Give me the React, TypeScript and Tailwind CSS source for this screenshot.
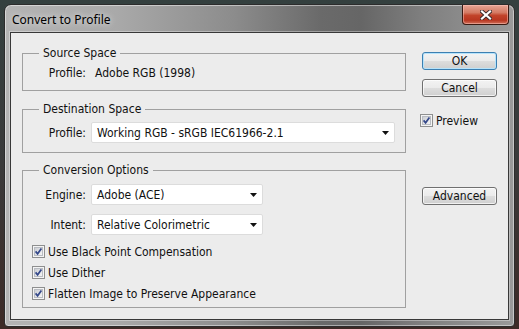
import React from "react";

const F = "font-['DejaVu_Sans_Condensed','DejaVu_Sans',sans-serif] text-[12px] leading-[14px] text-[#111]";

function Check() {
  return (
    <svg width="13" height="13" viewBox="0 0 13 13" className="shrink-0">
      <defs>
        <linearGradient id="cbg" x1="0" y1="0" x2="1" y2="1">
          <stop offset="0" stopColor="#c9ccd1" />
          <stop offset="1" stopColor="#f7f7f7" />
        </linearGradient>
      </defs>
      <rect x="0.5" y="0.5" width="12" height="12" fill="#f4f4f4" stroke="#8e8f8f" />
      <rect x="2.5" y="2.5" width="8" height="8" fill="url(#cbg)" stroke="#b9bcc2" />
      <path d="M3.6 6.4 L5.6 8.8 L9.4 3.6" fill="none" stroke="#34488a" strokeWidth="1.7" />
    </svg>
  );
}

function Arrow() {
  return (
    <svg width="7" height="4" viewBox="0 0 7 4" className="shrink-0">
      <path d="M0 0 H7 L3.5 4 Z" fill="#111" />
    </svg>
  );
}

function Select({ value, w }: { value: string; w: string }) {
  return (
    <div className={`${w} h-[21px] bg-white border border-[#dcdcdc] rounded-[2px] flex items-center pl-[5px] pr-[5px] justify-between`}>
      <span className="whitespace-nowrap">{value}</span>
      <Arrow />
    </div>
  );
}

function Group({ title, className, children }: { title: string; className: string; children: React.ReactNode }) {
  return (
    <div className={`relative border border-[#a0a0a0] ${className}`}>
      <span className="absolute left-[16px] top-[-8px] px-[4px] bg-[#ececec] leading-[14px] whitespace-nowrap">{title}</span>
      {children}
    </div>
  );
}

function Btn({ label, primary, className = "" }: { label: string; primary?: boolean; className?: string }) {
  return (
    <div
      className={`w-[75px] h-[18px] rounded-[3px] border flex items-center justify-center bg-[linear-gradient(180deg,#f3f3f3_0%,#ebebeb_48%,#dddddd_52%,#cfcfcf_100%)] ${
        primary
          ? "border-[#3c7fb1] shadow-[inset_0_0_0_1px_#b6e3fb]"
          : "border-[#707070] shadow-[inset_0_0_0_1px_rgba(255,255,255,0.7)]"
      } ${className}`}
    >
      {label}
    </div>
  );
}

function CheckRow({ label }: { label: string }) {
  return (
    <div className="h-[21px] flex items-center pl-[9px] gap-[3px]">
      <Check />
      <span className="whitespace-nowrap">{label}</span>
    </div>
  );
}

export default function App() {
  return (
    <div className="w-[519px] h-[329px] overflow-hidden pt-[4px] px-[4px] pb-[2px] bg-[linear-gradient(180deg,#34403f_0%,#3a3a3a_50%,#3d2a26_100%)]">
      <div className="h-full rounded-t-[7px] rounded-b-[4px] border border-[#2c2c2c] shadow-[inset_0_0_0_1px_rgba(255,255,255,0.45)] flex flex-col bg-[linear-gradient(90deg,#b4b4b4_0%,#a9a9a9_22%,#8c8c8c_45%,#6a6a6a_62%,#666666_70%,#7f7f7f_82%,#9a9a9a_100%)]">
        <div className="h-[27px] shrink-0 flex justify-between pl-[7px] pr-[5px]">
          <span className="pt-[7px] font-['Noto_Sans','Liberation_Sans',sans-serif] text-[12px] leading-[16px] text-black [text-shadow:0_0_6px_rgba(255,255,255,0.9)]">
            Convert to Profile
          </span>
          <div className="w-[47px] h-[20px] rounded-b-[4px] border border-[#3b1a12] border-t-0 shadow-[inset_0_0_0_1px_rgba(255,200,190,0.5)] bg-[linear-gradient(180deg,#e7a595_0%,#d47a63_40%,#c2432a_55%,#b83620_80%,#d0705a_100%)] flex items-center justify-center">
            <svg width="12" height="10" viewBox="0 0 12 10">
              <path d="M2 1.5 L10 8.5 M10 1.5 L2 8.5" stroke="#3a2a2a" strokeWidth="4" strokeLinecap="square" />
              <path d="M2 1.5 L10 8.5 M10 1.5 L2 8.5" stroke="#ffffff" strokeWidth="2.2" strokeLinecap="square" />
            </svg>
          </div>
        </div>
        <div className={`flex-1 mx-[5px] mb-[6px] border border-[#383838] shadow-[0_0_0_1px_rgba(255,255,255,0.35)] bg-[#ececec] flex pl-[11px] ${F}`}>
          <div className="w-[384px] pt-[20px] flex flex-col">
            <Group title="Source Space" className="pt-[12px] pb-[10px]">
              <div className="flex items-center">
                <span className="w-[63px] text-right">Profile:</span>
                <span className="ml-[9px]">Adobe RGB (1998)</span>
              </div>
            </Group>
            <Group title="Destination Space" className="mt-[18px] pt-[12px] pb-[9px]">
              <div className="flex items-center">
                <span className="w-[63px] text-right">Profile:</span>
                <div className="ml-[5px]">
                  <Select value="Working RGB - sRGB IEC61966-2.1" w="w-[304px]" />
                </div>
              </div>
            </Group>
            <Group title="Conversion Options" className="mt-[17px] pt-[13px] pb-[3px]">
              <div className="flex items-center">
                <span className="w-[63px] text-right">Engine:</span>
                <div className="ml-[5px]">
                  <Select value="Adobe (ACE)" w="w-[172px]" />
                </div>
              </div>
              <div className="flex items-center mt-[9px]">
                <span className="w-[63px] text-right">Intent:</span>
                <div className="ml-[5px]">
                  <Select value="Relative Colorimetric" w="w-[172px]" />
                </div>
              </div>
              <div className="mt-[6px]">
                <CheckRow label="Use Black Point Compensation" />
                <CheckRow label="Use Dither" />
                <CheckRow label="Flatten Image to Preserve Appearance" />
              </div>
            </Group>
          </div>
          <div className="ml-[16px] w-[75px] pt-[19px] flex flex-col">
            <Btn label="OK" primary />
            <Btn label="Cancel" className="mt-[9px]" />
            <div className="mt-[17px] h-[13px] flex items-center gap-[3px] ml-[-2px]">
              <Check />
              <span>Preview</span>
            </div>
            <Btn label="Advanced" className="mt-[60px]" />
          </div>
        </div>
      </div>
    </div>
  );
}
